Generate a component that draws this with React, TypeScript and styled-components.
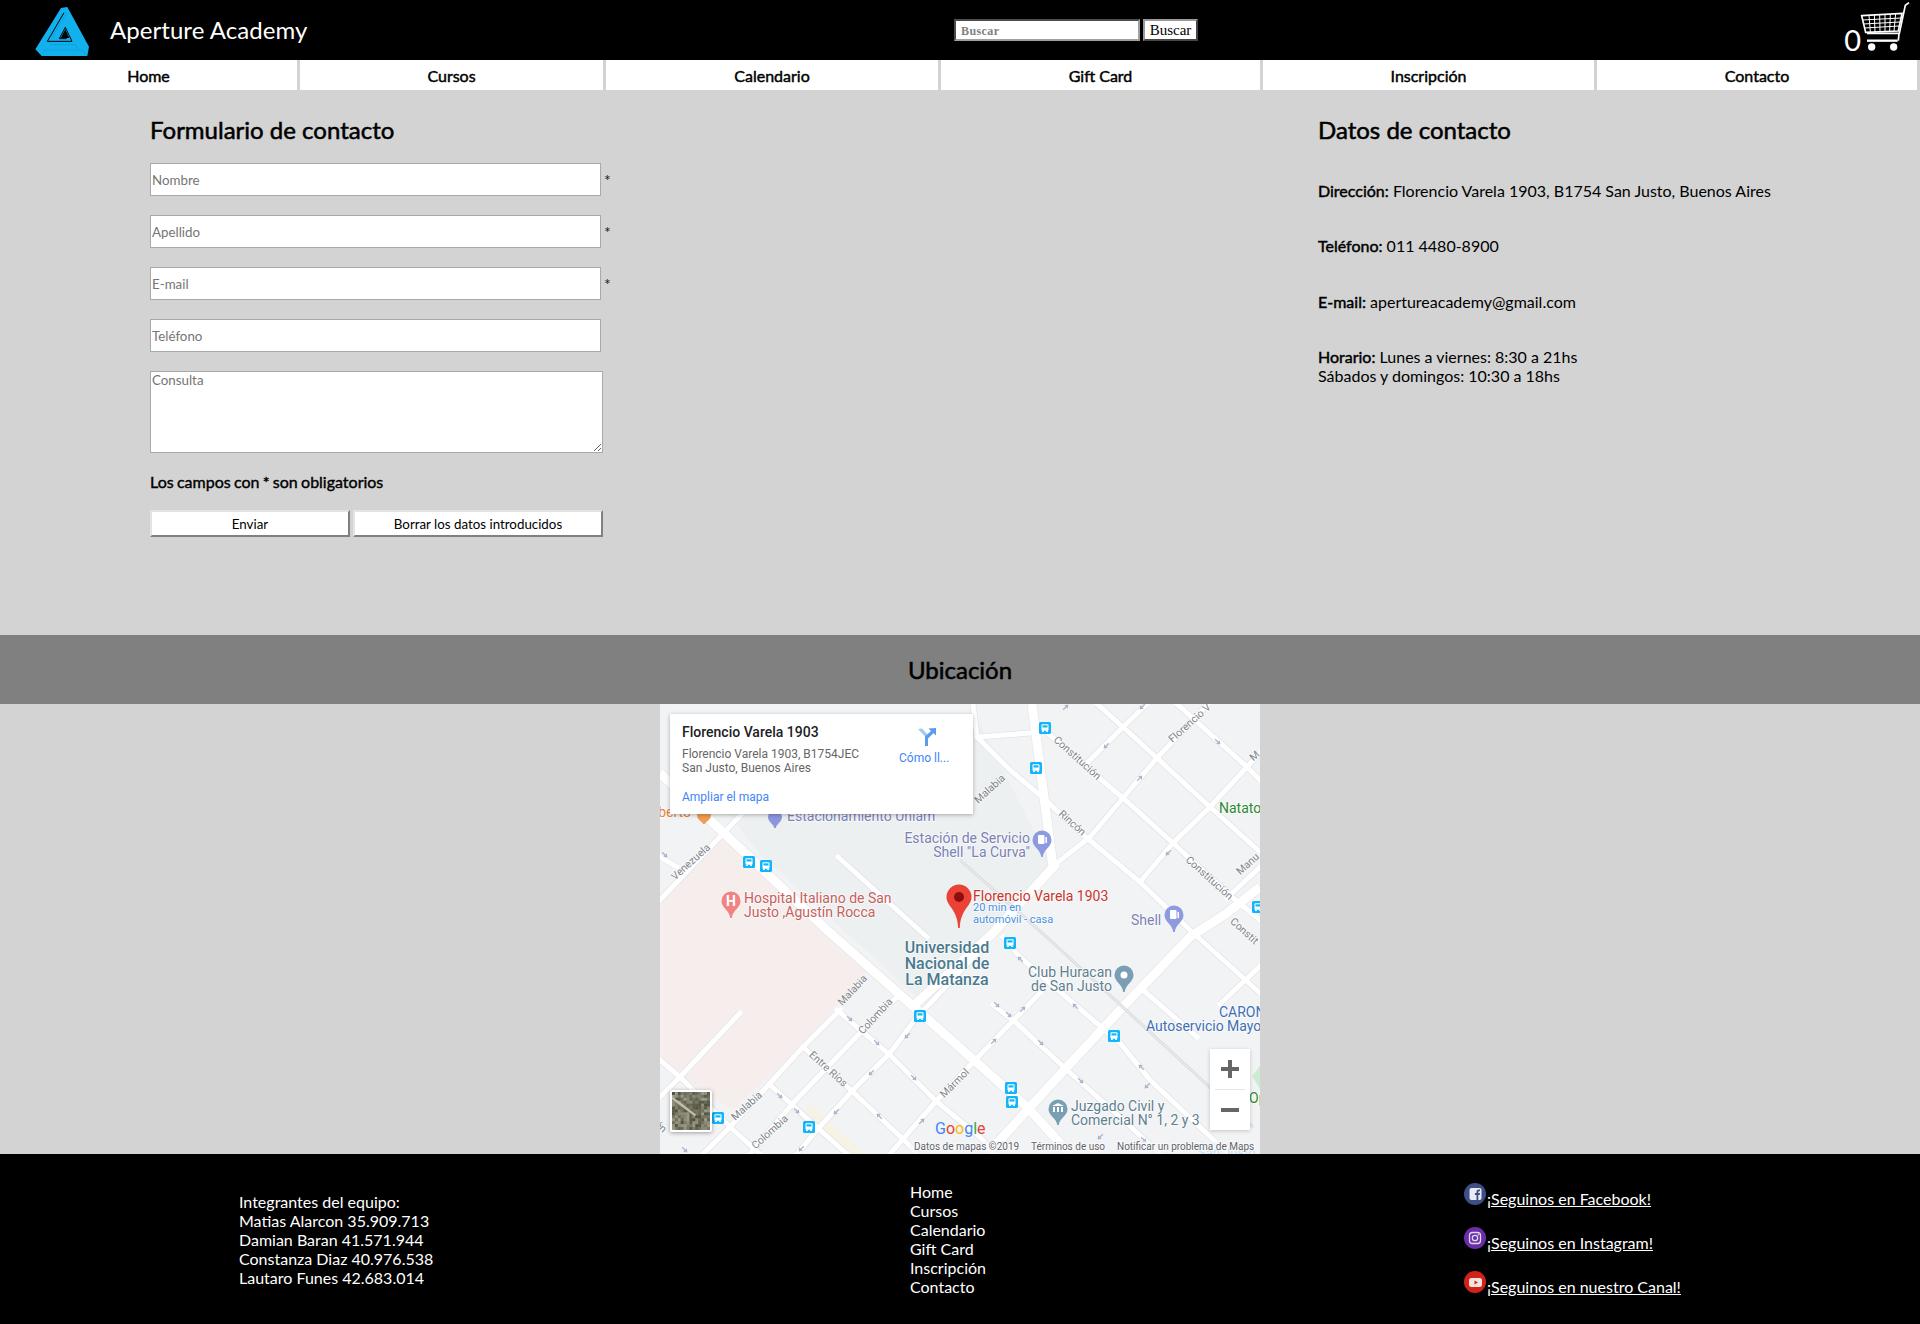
import React from "react";
import styled, { createGlobalStyle } from "styled-components";

const Global = createGlobalStyle`
  html, body { margin: 0; padding: 0; background: #d3d3d3; }
  body { font-family: Lato, "Liberation Sans", sans-serif; font-size: 16px; color: #000; }
  * { box-sizing: border-box; }
`;

const Page = styled.div`
  width: 1920px;
  height: 1324px;
  display: flex;
  flex-direction: column;
  overflow: hidden;
`;

const Header = styled.header`
  height: 60px;
  background: #000;
  display: grid;
  grid-template-columns: 954px 244px 1fr;
  align-items: center;
`;
const Brand = styled.div`
  display: flex;
  align-items: center;
  padding-left: 30px;
  gap: 16px;
`;
const LogoSvg = styled.svg`
  display: block;
  margin-top: 2px;
`;
const BrandName = styled.span`
  color: #fff;
  font-size: 24px;
  letter-spacing: 0.05px;
  margin-top: -2px;
`;
const SearchForm = styled.form`
  display: flex;
  gap: 3px;
  height: 22px;
`;
const SearchInput = styled.input`
  width: 186px;
  height: 22px;
  border: 2px inset #a0a0a0;
  background: #fff;
  padding: 2px 5px 0;
  font-family: "Liberation Serif", serif;
  font-size: 12px;
  font-weight: 700;
  letter-spacing: 0.4px;
  &::placeholder { color: #808080; opacity: 1; }
`;
const SearchButton = styled.button`
  width: 55px;
  height: 22px;
  border: 2px outset #9a9a9a;
  background: #fff;
  padding: 0;
  font-family: "Liberation Serif", serif;
  font-size: 15px;
  line-height: 16px;
  color: #000;
`;
const CartBox = styled.div`
  display: flex;
  justify-content: flex-end;
  align-items: flex-end;
  height: 60px;
  padding-right: 5px;
`;
const CartCount = styled.span`
  color: #fff;
  font-size: 29px;
  line-height: 35px;
  margin-bottom: 3px;
`;
const CartIcon = styled.svg`
  width: 60px;
  height: 56px;
  margin-bottom: 4px;
  margin-left: -6px;
`;

const Nav = styled.nav`
  height: 30px;
  display: grid;
  grid-template-columns: 300px 306px 335px 322px 334px 323px;
  background: #fff;
`;
const NavItem = styled.a`
  display: flex;
  align-items: center;
  justify-content: center;
  background: #fff;
  border-right: 3px solid #d3d3d3;
  font-size: 16px;
  font-weight: 400;
  color: #000;
  -webkit-text-stroke: 0.45px #000;
`;

const Contact = styled.main`
  height: 545px;
  background: #d3d3d3;
  display: grid;
  grid-template-columns: 1168px 1fr;
  padding: 25px 0 0 150px;
`;
const Title = styled.h2`
  margin: 0;
  font-size: 24px;
  line-height: 29px;
  font-weight: 400;
  -webkit-text-stroke: 0.55px #000;
`;
const Form = styled.form`
  display: flex;
  flex-direction: column;
  margin-top: 19px;
  gap: 19px;
`;
const FieldRow = styled.div`
  display: flex;
  align-items: flex-start;
  gap: 3px;
`;
const TextField = styled.input`
  width: 451px;
  height: 33px;
  border: 1px solid #a9a9a9;
  background: #fff;
  padding: 1px;
  font-family: Lato, sans-serif;
  font-size: 13.33px;
  &::placeholder { color: #757575; opacity: 1; }
`;
const Star = styled.span`
  font-size: 16px;
  line-height: 33px;
  color: #222;
`;
const TextArea = styled.textarea`
  display: block;
  width: 453px;
  height: 82px;
  border: 1px solid #a9a9a9;
  background: #fff;
  padding: 0 1px;
  font-family: Lato, sans-serif;
  font-size: 13.33px;
  margin: 0;
  &::placeholder { color: #757575; opacity: 1; }
`;
const Note = styled.p`
  margin: 0;
  font-size: 16px;
  line-height: 19px;
  word-spacing: -0.8px;
  -webkit-text-stroke: 0.4px #000;
`;
const Buttons = styled.div`
  display: flex;
  gap: 3px;
  margin-top: 0;
`;
const FormButton = styled.button<{ $w: number }>`
  width: ${(p) => p.$w}px;
  height: 27px;
  background: #fff;
  border: 2px solid;
  border-color: #e4e4e4 #808080 #808080 #e4e4e4;
  padding: 0;
  font-family: Lato, sans-serif;
  font-size: 13.33px;
  color: #000;
`;
const Info = styled.div`
  display: flex;
  flex-direction: column;
`;
const InfoItem = styled.p`
  margin: 37px 0 0;
  line-height: 19px;
  font-size: 16px;
  & + & { margin-top: 36.4px; }
`;
const InfoLabel = styled.strong`
  font-weight: 400;
  -webkit-text-stroke: 0.45px #000;
`;

const Band = styled.section`
  height: 69px;
  background: #808080;
  display: flex;
  align-items: center;
  justify-content: center;
`;

const MapRow = styled.section`
  height: 450px;
  display: flex;
  justify-content: center;
  background: #d3d3d3;
`;
const MapFrame = styled.div`
  position: relative;
  width: 600px;
  height: 450px;
  overflow: hidden;
  background: #f2f3f5;
  font-family: Roboto, sans-serif;
`;
const MapSvg = styled.svg`
  display: block;
`;
const Lbl = styled.text<{ $c: string; $s?: number; $w?: number }>`
  fill: ${(p) => p.$c};
  font-family: Roboto, sans-serif;
  font-size: ${(p) => p.$s ?? 14}px;
  font-weight: ${(p) => p.$w ?? 400};
  paint-order: stroke;
  stroke: rgba(255, 255, 255, 0.75);
  stroke-width: 1.5px;
`;
const Card = styled.div`
  position: absolute;
  left: 10px;
  top: 10px;
  width: 303px;
  height: 100px;
  background: #fff;
  box-shadow: 0 1px 4px rgba(0, 0, 0, 0.3);
  padding: 9px 12px;
  display: grid;
  grid-template-columns: 1fr 62px;
`;
const CardMain = styled.div`
  display: flex;
  flex-direction: column;
`;
const CardTitle = styled.div`
  font-size: 14px;
  font-weight: 500;
  line-height: 18px;
  color: #202124;
`;
const CardAddr = styled.div`
  font-size: 12px;
  line-height: 14px;
  margin-top: 6px;
  color: #666;
`;
const CardLink = styled.a`
  font-size: 12px;
  line-height: 14px;
  margin-top: 15px;
  color: #4285f4;
`;
const Directions = styled.div`
  display: flex;
  flex-direction: column;
  align-items: flex-start;
  padding-top: 4px;
  font-size: 12px;
  color: #4285f4;
`;
const DirIcon = styled.svg`
  margin: 0 0 4px 18px;
`;
const ZoomBox = styled.div`
  position: absolute;
  left: 550px;
  top: 345px;
  width: 40px;
  height: 81px;
  background: #fff;
  box-shadow: 0 1px 4px rgba(0, 0, 0, 0.2);
  display: flex;
  flex-direction: column;
`;
const ZoomPart = styled.div<{ $line?: boolean }>`
  flex: 1;
  display: flex;
  align-items: center;
  justify-content: center;
  margin: 0 5px;
  border-top: ${(p) => (p.$line ? "1px solid #e6e6e6" : "none")};
`;
const Thumb = styled.div`
  position: absolute;
  left: 10px;
  top: 386px;
  width: 42px;
  height: 42px;
  border: 2px solid #fff;
  border-radius: 2px;
  box-shadow: 0 1px 4px rgba(0, 0, 0, 0.35);
  overflow: hidden;
  background: #7c7a66;
`;

const Footer = styled.footer`
  height: 170px;
  background: #000;
  color: #fff;
  display: grid;
  grid-template-columns: 671px 554px 1fr;
  padding-left: 239px;
  font-size: 16px;
  line-height: 19px;
`;
const FootTeam = styled.div`
  padding-top: 38px;
`;
const FootLinks = styled.div`
  padding-top: 28px;
  display: flex;
  flex-direction: column;
`;
const FootSocial = styled.div`
  padding-top: 29px;
  display: flex;
  flex-direction: column;
  gap: 22px;
`;
const SocialRow = styled.div`
  display: flex;
  align-items: flex-end;
  height: 22px;
  gap: 1px;
`;
const SocialLink = styled.a`
  color: #fff;
  text-decoration: underline;
  line-height: 19px;
  margin-bottom: -3px;
`;
const Round = styled.svg`
  display: block;
  flex: none;
`;

const minor: number[][][] = [
  [[382,24],[438,73],[463,94],[513,139],[573,194],[600,216]],
  [[437,0],[463,23],[497,54],[550,103],[600,148]],
  [[517,0],[587,63],[600,76]],
  [[317,33],[350,66],[382,93],[427,134],[480,178],[530,226],[600,289]],
  [[427,59],[463,23],[487,0]],
  [[397,159],[430,133],[463,94],[497,54],[548,0]],
  [[480,178],[513,139],[550,103],[587,63],[600,49]],
  [[567,194],[600,163]],
  [[313,0],[317,33],[370,29]],
  [[483,286],[537,333]],
  [[178,153],[267,233]],
  [[343,233],[360,253],[413,299],[460,339],[490,376],[557,439],[568,450]],
  [[333,301],[353,316],[407,366],[460,413],[500,450]],
  [[0,356],[20,373],[70,423],[100,450]],
  [[80,309],[20,373],[0,393]],
  [[180,306],[143,343],[70,423],[43,450]],
  [[320,246],[278,291],[257,313],[230,349],[193,386],[157,426],[137,450]],
  [[237,293],[200,329],[133,399],[90,450]],
  [[177,306],[230,351],[277,398],[320,433],[336,450]],
  [[143,343],[193,388],[247,439],[257,450]],
  [[110,381],[160,426],[187,450]],
  [[380,289],[317,354],[277,396],[230,450]],
  [[0,196],[57,136],[115,75]],
  [[0,153],[17,163]],
  [[600,262],[560,300]],
];
const major: number[][][] = [
  [[372,0],[393,163]],
  [[327,450],[407,363],[460,306],[530,233],[567,209],[600,183]],
  [[250,305],[333,229],[397,159]],
  [[0,69],[50,116],[167,226],[333,373],[367,403],[410,450]],
];
const bus: number[][] = [[385,24],[376,64],[598,203],[350,239],[89,158],[106,162],[260,312],[58,414],[149,423],[454,332],[351,384],[352,398]];
const arrows: number[][] = [
  [406,3,-45],[482,3,135],[446,42,135],[558,38,45],[480,74,-45],[508,149,135],[5,151,45],
  [190,315,45],[217,339,45],[247,332,135],[211,369,135],[254,374,45],[120,392,45],[137,407,45],[176,408,135],[219,412,225],[262,417,-45],[141,445,135],[25,446,45],
  [360,255,225],[337,301,45],[349,311,45],[363,305,-45],[334,337,-45],[381,339,45],[415,302,225],[481,363,225],[487,382,135],[421,377,45],[440,433,135],[484,436,45],
];
const streets: [string, number, number, number][] = [
  ["Constitución",415,53,42],["Florencio V",532,18,-42],["Malabia",332,84,-42],["Rincón",410,118,42],["Constitución",547,173,42],["Manu",590,159,-42],["M",597,51,-42],["Constit",582,226,42],
  ["Venezuela",33,157,-42],["Malabia",195,285,-47],["Colombia",218,311,-47],["Entre Ríos",166,364,42],["Mármol",297,378,-45],["Malabia",89,401,-42],["Colombia",112,427,-42],["Rincón",-9,415,42],
];
const pts = (l: number[][]) => l.map((p) => p.join(",")).join(" ");

const Pin = ({ x, y, r, tip, c }: { x: number; y: number; r: number; tip: number; c: string }) => (
  <path
    d={`M${x - r} ${y}A${r} ${r} 0 1 1 ${x + r} ${y}C${x + r} ${y + r * 0.75} ${x + 1.5} ${y + r * 0.95} ${x + 0.8} ${tip}H${x - 0.8}C${x - 1.5} ${y + r * 0.95} ${x - r} ${y + r * 0.75} ${x - r} ${y}Z`}
    fill={c}
  />
);

const satellite = Array.from({ length: 169 }, (_, i) => {
  const n = Math.sin(i * 12.9898) * 43758.5453;
  const v = Math.floor((n - Math.floor(n)) * 80);
  return { x: (i % 13) * 3, y: Math.floor(i / 13) * 3, c: `rgb(${80 + v},${80 + v},${62 + v})` };
});

const MapDrawing = () => (
  <MapSvg width={600} height={450} viewBox="0 0 600 450">
    <rect width={600} height={450} fill="#f2f3f5" />
    <polygon points="60,100 320,20 393,165 260,296 100,150" fill="#edf0f1" />
    <polygon points="0,196 60,133 180,236 208,266 143,341 73,406 22,373 0,353" fill="#f6eeec" />
    <polygon points="147,400 155,404 205,450 180,450 147,412" fill="#f6f3e6" />
    {minor.map((l, i) => <polyline key={i} points={pts(l)} fill="none" stroke="#e3e4e7" strokeWidth={6.5} />)}
    {major.map((l, i) => <polyline key={i} points={pts(l)} fill="none" stroke="#e6e7e9" strokeWidth={10.5} />)}
    {minor.map((l, i) => <polyline key={i} points={pts(l)} fill="none" stroke="#fff" strokeWidth={5} strokeLinecap="round" />)}
    {major.map((l, i) => <polyline key={i} points={pts(l)} fill="none" stroke="#fff" strokeWidth={9} />)}
    <polyline points="300,156 390,236 593,423" fill="none" stroke="#d9dbde" strokeWidth={3} />
    <polyline points="300,156 390,236 593,423" fill="none" stroke="#f2f3f5" strokeWidth={1} />
    <polygon points="592,372 600,362 600,385" fill="#cdebd0" />
    {arrows.map(([x, y, a], i) => (
      <g key={i} transform={`translate(${x} ${y}) rotate(${a})`}>
        <path d="M-4 0H1" stroke="#aeb3cc" strokeWidth={1.3} fill="none" />
        <path d="M0-2.6L3.4 0 0 2.6z" fill="#aeb3cc" />
      </g>
    ))}
    {bus.map(([x, y], i) => (
      <g key={i} transform={`translate(${x - 6} ${y - 6})`}>
        <rect width={12} height={12} rx={1.5} fill="#12b5fb" />
        <rect x={2.5} y={2.2} width={7} height={6.6} rx={1} fill="#fff" />
        <rect x={3.5} y={3.3} width={5} height={2.2} fill="#12b5fb" />
        <rect x={3} y={8.6} width={1.8} height={1.4} fill="#fff" />
        <rect x={7.2} y={8.6} width={1.8} height={1.4} fill="#fff" />
      </g>
    ))}
    {streets.map(([t, x, y, a], i) => (
      <Lbl key={i} $c="#80848a" $s={10.5} textAnchor="middle" transform={`translate(${x} ${y + 3.5}) rotate(${a})`}>{t}</Lbl>
    ))}

    <Pin x={44} y={111} r={7} tip={120} c="#f29b53" />
    <Lbl $c="#e8833a" $s={14} x={31} y={113} textAnchor="end">berto</Lbl>
    <Pin x={115} y={113} r={7} tip={124} c="#8a97dd" />
    <Lbl $c="#7b83ba" $s={14} x={127} y={117}>Estacionamiento Uniam</Lbl>
    <Lbl $c="#7b80b5" $s={14} x={370} y={139} textAnchor="end">Estación de Servicio</Lbl>
    <Lbl $c="#7b80b5" $s={14} x={370} y={153} textAnchor="end">Shell "La Curva"</Lbl>
    <Pin x={382} y={136} r={9.5} tip={153} c="#8c9ae0" />
    <rect x={378} y={131} width={6.5} height={9} rx={1} fill="#fff" />
    <rect x={385.5} y={133} width={1.5} height={6} fill="#fff" />
    <Lbl $c="#7b80b5" $s={14} x={471} y={221}>Shell</Lbl>
    <Pin x={514} y={211} r={9.5} tip={228} c="#8c9ae0" />
    <rect x={510} y={206} width={6.5} height={9} rx={1} fill="#fff" />
    <rect x={517.5} y={208} width={1.5} height={6} fill="#fff" />
    <Lbl $c="#2c8a33" $s={14} x={559} y={109}>Natato</Lbl>
    <Lbl $c="#2c8a33" $s={14} x={589} y={399}>Op</Lbl>

    <Pin x={71} y={197} r={9.5} tip={214} c="#f08383" />
    <text x={71} y={202} textAnchor="middle" fontFamily="Roboto, sans-serif" fontSize={14} fontWeight={700} fill="#fff">H</text>
    <Lbl $c="#c4615e" $s={14} x={84} y={199}>Hospital Italiano de San</Lbl>
    <Lbl $c="#c4615e" $s={14} x={84} y={213}>Justo ,Agustín Rocca</Lbl>

    <Lbl $c="#c9342a" $s={14} x={313} y={197}>Florencio Varela 1903</Lbl>
    <Lbl $c="#4a90e2" $s={11} x={313} y={207}>20 min en</Lbl>
    <Lbl $c="#4a90e2" $s={11} x={313} y={219}>automóvil - casa</Lbl>
    <Pin x={299} y={193} r={12.5} tip={224} c="#ea4335" />
    <circle cx={299} cy={193} r={5} fill="#8b0f0c" />

    <Lbl $c="#4a7a8e" $s={16} $w={500} x={287} y={249} textAnchor="middle">Universidad</Lbl>
    <Lbl $c="#4a7a8e" $s={16} $w={500} x={287} y={265} textAnchor="middle">Nacional de</Lbl>
    <Lbl $c="#4a7a8e" $s={16} $w={500} x={287} y={281} textAnchor="middle">La Matanza</Lbl>

    <Lbl $c="#5f7f90" $s={14} x={368} y={273}>Club Huracan</Lbl>
    <Lbl $c="#5f7f90" $s={14} x={371} y={287}>de San Justo</Lbl>
    <Pin x={464} y={271} r={9.5} tip={288} c="#7a9fb5" />
    <circle cx={464} cy={271} r={3.5} fill="#fff" />
    <Lbl $c="#3f6fb5" $s={14} x={559} y={313}>CARON</Lbl>
    <Lbl $c="#3f6fb5" $s={14} x={486} y={327}>Autoservicio Mayo</Lbl>
    <Pin x={398} y={405} r={9.5} tip={421} c="#78a0b2" />
    <path d="M392 402l6-3 6 3zM393 403h2v5h-2zM397 403h2v5h-2zM401 403h2v5h-2z" fill="#fff" />
    <Lbl $c="#5f7f90" $s={14} x={411} y={407}>Juzgado Civil y</Lbl>
    <Lbl $c="#5f7f90" $s={14} x={411} y={421}>Comercial N° 1, 2 y 3</Lbl>

    <text x={275} y={430} fontFamily="Roboto, sans-serif" fontSize={16} fontWeight={400}>
      <tspan fill="#4285f4">G</tspan><tspan fill="#ea4335">o</tspan><tspan fill="#fbbc05">o</tspan><tspan fill="#4285f4">g</tspan><tspan fill="#34a853">l</tspan><tspan fill="#ea4335">e</tspan>
    </text>
    <Lbl $c="#8fc4ee" $s={13} x={538} y={453}>San Justo</Lbl>
    <rect x={250} y={437} width={350} height={13} fill="#f2f3f5" opacity={0.55} />
    <Lbl $c="#5f6368" $s={10} x={254} y={446}>Datos de mapas ©2019</Lbl>
    <Lbl $c="#5f6368" $s={10} x={371} y={446}>Términos de uso</Lbl>
    <Lbl $c="#5f6368" $s={10} x={457} y={446}>Notificar un problema de Maps</Lbl>
  </MapSvg>
);

const Logo = () => (
  <LogoSvg width={64} height={54} viewBox="0 0 192 162">
    <path d="M93 12L112 9 177 128 172 156 35 156 16 136z" fill="#12b1ee" />
    <path d="M102 26L52 112 126 112 106 70 88 104 110 104" fill="none" stroke="#000" strokeWidth={3} />
    <path d="M66 100L110 26M60 122L136 122 146 136" fill="none" stroke="#0b8cc0" strokeWidth={1.5} />
    <path d="M35 156L44 138 158 138 172 156" fill="none" stroke="#0b8cc0" strokeWidth={1} />
    <path d="M92 102L106 76 118 102z" fill="#000" />
  </LogoSvg>
);

const Cart = () => (
  <CartIcon viewBox="0 0 180 168">
    <path d="M162 8L151 16 133 100 36 100" fill="none" stroke="#fff" strokeWidth={5} />
    <path d="M128 122H36" fill="none" stroke="#fff" strokeWidth={7} />
    <path d="M132 100L130 122" fill="none" stroke="#fff" strokeWidth={5} />
    <path d="M20 47L141 40 130 93 32 97z" fill="none" stroke="#fff" strokeWidth={5} />
    <path d="M22 60L138 54M25 72L135 66M28 84L132 78M42 46L46 96M58 45L60 96M74 44L75 95M90 43L90 95M106 42L104 94M122 41L117 94" stroke="#fff" strokeWidth={3} fill="none" />
    <circle cx={50} cy={141} r={11} fill="#fff" />
    <circle cx={116} cy={141} r={11} fill="#fff" />
  </CartIcon>
);

const Facebook = () => (
  <Round width={22} height={22} viewBox="0 0 22 22">
    <circle cx={11} cy={11} r={11} fill="#3f4f86" />
    <rect x={5.5} y={5} width={12} height={12} rx={2} fill="#e9ecf5" />
    <path d="M12.5 17v-5h-1.6v-2h1.6V8.6c0-1.4 1-2.2 2.2-2.2h1.3v1.9h-1c-.5 0-.7.2-.7.7V10h1.7l-.3 2h-1.4v5z" fill="#3f4f86" />
  </Round>
);
const Instagram = () => (
  <Round width={22} height={22} viewBox="0 0 22 22">
    <circle cx={11} cy={11} r={11} fill="#6a2fa6" />
    <rect x={5.5} y={5.5} width={11} height={11} rx={3} fill="none" stroke="#e3d7f2" strokeWidth={1.3} />
    <circle cx={11} cy={11} r={2.7} fill="none" stroke="#e3d7f2" strokeWidth={1.3} />
    <circle cx={14.3} cy={7.7} r={0.8} fill="#e3d7f2" />
  </Round>
);
const Youtube = () => (
  <Round width={22} height={22} viewBox="0 0 22 22">
    <circle cx={11} cy={11} r={11} fill="#d2231b" />
    <rect x={5} y={7} width={13} height={9} rx={2.5} fill="#f3e4e0" />
    <path d="M10.5 9.5l3.5 2-3.5 2z" fill="#d2231b" />
  </Round>
);

const navItems = ["Home", "Cursos", "Calendario", "Gift Card", "Inscripción", "Contacto"];

export default function App() {
  return (
    <Page>
      <Global />
      <Header>
        <Brand>
          <Logo />
          <BrandName>Aperture Academy</BrandName>
        </Brand>
        <SearchForm>
          <SearchInput placeholder="Buscar" />
          <SearchButton type="button">Buscar</SearchButton>
        </SearchForm>
        <CartBox>
          <CartCount>0</CartCount>
          <Cart />
        </CartBox>
      </Header>
      <Nav>
        {navItems.map((n) => <NavItem key={n}>{n}</NavItem>)}
      </Nav>
      <Contact>
        <div>
          <Title>Formulario de contacto</Title>
          <Form>
            <FieldRow><TextField placeholder="Nombre" /><Star>*</Star></FieldRow>
            <FieldRow><TextField placeholder="Apellido" /><Star>*</Star></FieldRow>
            <FieldRow><TextField placeholder="E-mail" /><Star>*</Star></FieldRow>
            <FieldRow><TextField placeholder="Teléfono" /></FieldRow>
            <TextArea placeholder="Consulta" />
            <Note>Los campos con * son obligatorios</Note>
            <Buttons>
              <FormButton type="button" $w={200}>Enviar</FormButton>
              <FormButton type="button" $w={250}>Borrar los datos introducidos</FormButton>
            </Buttons>
          </Form>
        </div>
        <Info>
          <Title>Datos de contacto</Title>
          <InfoItem><InfoLabel>Dirección:</InfoLabel> Florencio Varela 1903, B1754 San Justo, Buenos Aires</InfoItem>
          <InfoItem><InfoLabel>Teléfono:</InfoLabel> 011 4480-8900</InfoItem>
          <InfoItem><InfoLabel>E-mail:</InfoLabel> apertureacademy@gmail.com</InfoItem>
          <InfoItem><InfoLabel>Horario:</InfoLabel> Lunes a viernes: 8:30 a 21hs<br />Sábados y domingos: 10:30 a 18hs</InfoItem>
        </Info>
      </Contact>
      <Band><Title>Ubicación</Title></Band>
      <MapRow>
        <MapFrame>
          <MapDrawing />
          <Card>
            <CardMain>
              <CardTitle>Florencio Varela 1903</CardTitle>
              <CardAddr>Florencio Varela 1903, B1754JEC<br />San Justo, Buenos Aires</CardAddr>
              <CardLink>Ampliar el mapa</CardLink>
            </CardMain>
            <Directions>
              <DirIcon width={20} height={20} viewBox="0 0 20 20">
                <path d="M1 2l4-.5L11 8v11H8V9.5z" fill="#a5c8f5" />
                <path d="M8 19V9.5L14 4 11.5 1.5 19 1v7.5L16.5 6 11 11.5V19z" fill="#5a9bef" />
              </DirIcon>
              Cómo ll...
            </Directions>
          </Card>
          <Thumb>
            <svg width={38} height={38} viewBox="0 0 39 39" style={{ display: "block" }}>
              {satellite.map((s, i) => <rect key={i} x={s.x} y={s.y} width={3} height={3} fill={s.c} />)}
              <path d="M0 6L24 24" stroke="#c4bea6" strokeWidth={2.5} />
            </svg>
          </Thumb>
          <ZoomBox>
            <ZoomPart>
              <svg width={18} height={18} viewBox="0 0 18 18"><path d="M0 7h7V0h4v7h7v4h-7v7H7v-7H0z" fill="#666" /></svg>
            </ZoomPart>
            <ZoomPart $line>
              <svg width={18} height={18} viewBox="0 0 18 18"><rect y={7} width={18} height={4} fill="#666" /></svg>
            </ZoomPart>
          </ZoomBox>
        </MapFrame>
      </MapRow>
      <Footer>
        <FootTeam>
          Integrantes del equipo:<br />
          Matias Alarcon 35.909.713<br />
          Damian Baran 41.571.944<br />
          Constanza Diaz 40.976.538<br />
          Lautaro Funes 42.683.014
        </FootTeam>
        <FootLinks>
          {navItems.map((n) => <span key={n}>{n}</span>)}
        </FootLinks>
        <FootSocial>
          <SocialRow><Facebook /><SocialLink>¡Seguinos en Facebook!</SocialLink></SocialRow>
          <SocialRow><Instagram /><SocialLink>¡Seguinos en Instagram!</SocialLink></SocialRow>
          <SocialRow><Youtube /><SocialLink>¡Seguinos en nuestro Canal!</SocialLink></SocialRow>
        </FootSocial>
      </Footer>
    </Page>
  );
}
